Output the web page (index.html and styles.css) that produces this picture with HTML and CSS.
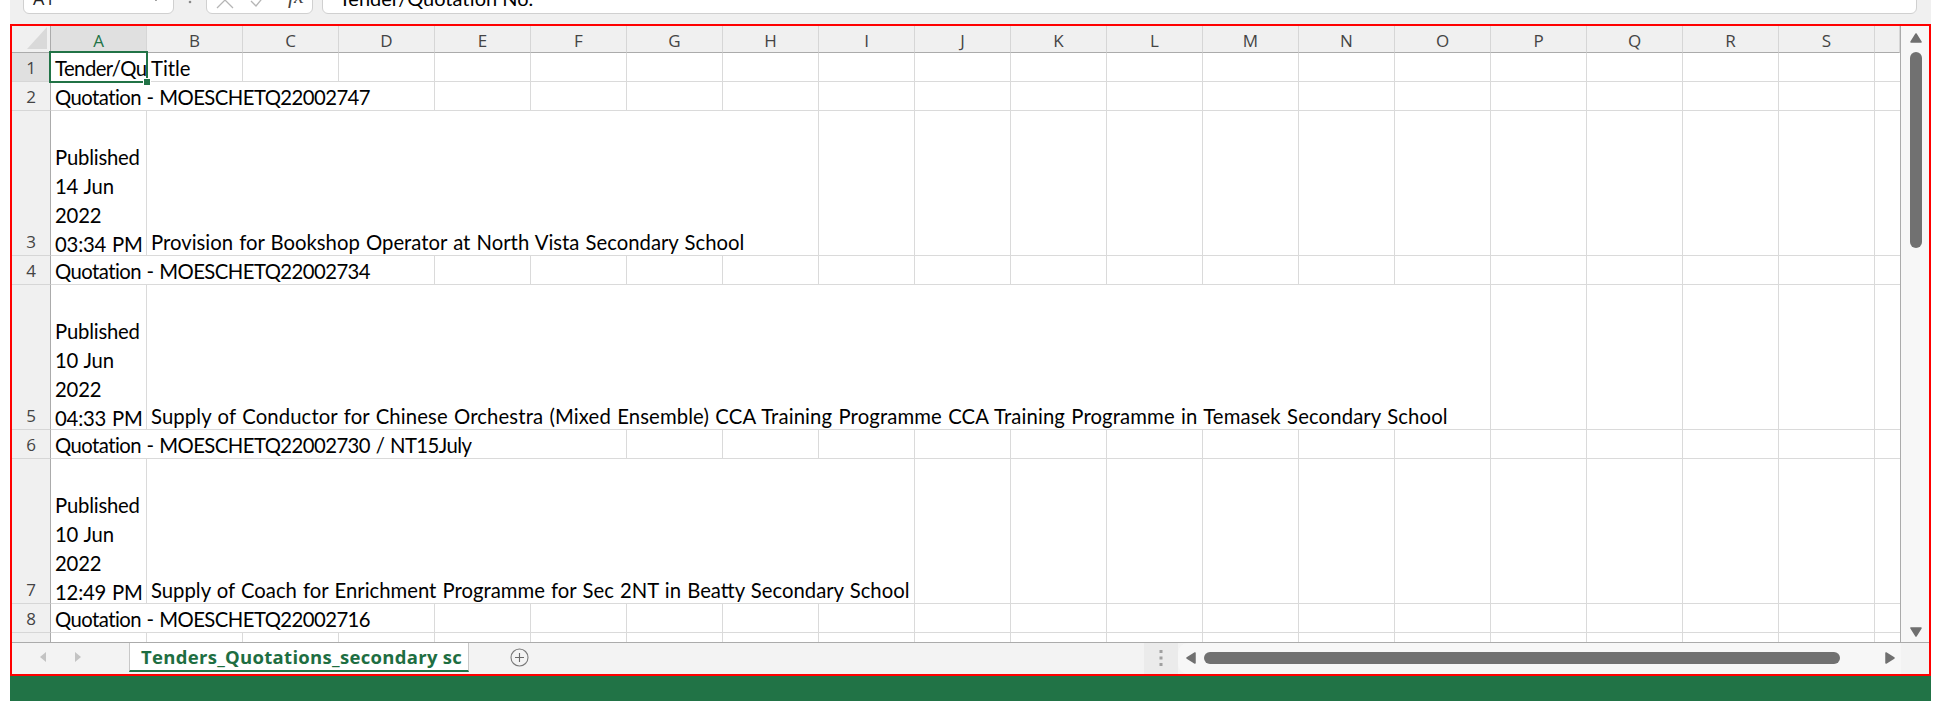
FILE: index.html
```html
<!DOCTYPE html>
<html lang="en">
<head>
<meta charset="utf-8">
<title>Tenders_Quotations_secondary sc</title>
<link rel="stylesheet" href="styles.css">
</head>
<body>
<div class="window">
  <div class="fbar">
    <div class="namebox"><span class="nb-text">A1</span>
      <svg class="nb-arrow" width="10" height="6" viewBox="0 0 10 6"><path d="M1 1 L5 5 L9 1" fill="none" stroke="#444" stroke-width="1.4"/></svg>
    </div>
    <div class="fb-dots"><svg width="4" height="32" viewBox="0 0 4 32"><circle cx="2" cy="12" r="1.3" fill="#8a8a8a"/><circle cx="2" cy="20" r="1.3" fill="#8a8a8a"/></svg></div>
    <div class="fb-btns">
      <svg class="fb-x" width="18" height="18" viewBox="0 0 18 18"><path d="M1 1 L17 17 M17 1 L1 17" stroke="#b5b5b5" stroke-width="1.3"/></svg>
      <svg class="fb-ok" width="16" height="14" viewBox="0 0 16 14"><path d="M1 7 L6 12 L15 1" fill="none" stroke="#b5b5b5" stroke-width="1.3"/></svg>
      <span class="fb-fx">fx</span>
    </div>
    <div class="fb-input">Tender/Quotation No.</div>
  </div>

  <div class="sheet">
    <div class="main">
      <div class="grid">
        <!-- header row -->
        <div class="corner"><svg width="20" height="22" viewBox="0 0 20 22"><path d="M20 0 L20 22 L0 22 Z" fill="#d9d9d9"/></svg></div>
        <div class="ch sel">A</div>
        <div class="ch">B</div>
        <div class="ch">C</div>
        <div class="ch">D</div>
        <div class="ch">E</div>
        <div class="ch">F</div>
        <div class="ch">G</div>
        <div class="ch">H</div>
        <div class="ch">I</div>
        <div class="ch">J</div>
        <div class="ch">K</div>
        <div class="ch">L</div>
        <div class="ch">M</div>
        <div class="ch">N</div>
        <div class="ch">O</div>
        <div class="ch">P</div>
        <div class="ch">Q</div>
        <div class="ch">R</div>
        <div class="ch">S</div>
        <div class="ch last"></div>

        <!-- row 1 -->
        <div class="rh sel">1</div>
        <div class="c txt clip code">Tender/Quotation No.</div>
        <div class="c txt">Title</div>
        <div class="c"></div>
        <div class="c"></div>
        <div class="c"></div>
        <div class="c"></div>
        <div class="c"></div>
        <div class="c"></div>
        <div class="c"></div>
        <div class="c"></div>
        <div class="c"></div>
        <div class="c"></div>
        <div class="c"></div>
        <div class="c"></div>
        <div class="c"></div>
        <div class="c"></div>
        <div class="c"></div>
        <div class="c"></div>
        <div class="c"></div>
        <div class="c last"></div>

        <!-- row 2 -->
        <div class="rh">2</div>
        <div class="c txt code span4">Quotation - MOESCHETQ22002747</div>
        <div class="c"></div>
        <div class="c"></div>
        <div class="c"></div>
        <div class="c"></div>
        <div class="c"></div>
        <div class="c"></div>
        <div class="c"></div>
        <div class="c"></div>
        <div class="c"></div>
        <div class="c"></div>
        <div class="c"></div>
        <div class="c"></div>
        <div class="c"></div>
        <div class="c"></div>
        <div class="c"></div>
        <div class="c last"></div>

        <!-- row 3 -->
        <div class="rh">3</div>
        <div class="c txt multi"><span>Published</span><span>14 Jun</span><span>2022</span><span>03:34 PM</span></div>
        <div class="c txt span7">Provision for Bookshop Operator at North Vista Secondary School</div>
        <div class="c"></div>
        <div class="c"></div>
        <div class="c"></div>
        <div class="c"></div>
        <div class="c"></div>
        <div class="c"></div>
        <div class="c"></div>
        <div class="c"></div>
        <div class="c"></div>
        <div class="c"></div>
        <div class="c"></div>
        <div class="c last"></div>

        <!-- row 4 -->
        <div class="rh">4</div>
        <div class="c txt code span4">Quotation - MOESCHETQ22002734</div>
        <div class="c"></div>
        <div class="c"></div>
        <div class="c"></div>
        <div class="c"></div>
        <div class="c"></div>
        <div class="c"></div>
        <div class="c"></div>
        <div class="c"></div>
        <div class="c"></div>
        <div class="c"></div>
        <div class="c"></div>
        <div class="c"></div>
        <div class="c"></div>
        <div class="c"></div>
        <div class="c"></div>
        <div class="c last"></div>

        <!-- row 5 -->
        <div class="rh">5</div>
        <div class="c txt multi"><span>Published</span><span>10 Jun</span><span>2022</span><span>04:33 PM</span></div>
        <div class="c txt long span14">Supply of Conductor for Chinese Orchestra (Mixed Ensemble) CCA Training Programme CCA Training Programme in Temasek Secondary School</div>
        <div class="c"></div>
        <div class="c"></div>
        <div class="c"></div>
        <div class="c"></div>
        <div class="c last"></div>

        <!-- row 6 -->
        <div class="rh">6</div>
        <div class="c txt code span6">Quotation - MOESCHETQ22002730 / NT15July</div>
        <div class="c"></div>
        <div class="c"></div>
        <div class="c"></div>
        <div class="c"></div>
        <div class="c"></div>
        <div class="c"></div>
        <div class="c"></div>
        <div class="c"></div>
        <div class="c"></div>
        <div class="c"></div>
        <div class="c"></div>
        <div class="c"></div>
        <div class="c"></div>
        <div class="c last"></div>

        <!-- row 7 -->
        <div class="rh">7</div>
        <div class="c txt multi"><span>Published</span><span>10 Jun</span><span>2022</span><span>12:49 PM</span></div>
        <div class="c txt span8">Supply of Coach for Enrichment Programme for Sec 2NT in Beatty Secondary School</div>
        <div class="c"></div>
        <div class="c"></div>
        <div class="c"></div>
        <div class="c"></div>
        <div class="c"></div>
        <div class="c"></div>
        <div class="c"></div>
        <div class="c"></div>
        <div class="c"></div>
        <div class="c"></div>
        <div class="c last"></div>

        <!-- row 8 -->
        <div class="rh">8</div>
        <div class="c txt code span4">Quotation - MOESCHETQ22002716</div>
        <div class="c"></div>
        <div class="c"></div>
        <div class="c"></div>
        <div class="c"></div>
        <div class="c"></div>
        <div class="c"></div>
        <div class="c"></div>
        <div class="c"></div>
        <div class="c"></div>
        <div class="c"></div>
        <div class="c"></div>
        <div class="c"></div>
        <div class="c"></div>
        <div class="c"></div>
        <div class="c"></div>
        <div class="c last"></div>

        <!-- row 9 (partially visible) -->
        <div class="rh">9</div>
        <div class="c"></div>
        <div class="c"></div>
        <div class="c"></div>
        <div class="c"></div>
        <div class="c"></div>
        <div class="c"></div>
        <div class="c"></div>
        <div class="c"></div>
        <div class="c"></div>
        <div class="c"></div>
        <div class="c"></div>
        <div class="c"></div>
        <div class="c"></div>
        <div class="c"></div>
        <div class="c"></div>
        <div class="c"></div>
        <div class="c"></div>
        <div class="c"></div>
        <div class="c"></div>
        <div class="c last"></div>

        <div class="active-cell"><span class="handle"></span></div>
      </div>

      <div class="vscroll">
        <svg class="v-up" width="12" height="10" viewBox="0 0 12 10"><path d="M6 1 L11 9 L1 9 Z" fill="#707070" stroke="#707070" stroke-width="1.5" stroke-linejoin="round"/></svg>
        <div class="v-thumb"></div>
        <div class="v-fill"></div>
        <svg class="v-down" width="12" height="10" viewBox="0 0 12 10"><path d="M1 1 L11 1 L6 9 Z" fill="#707070" stroke="#707070" stroke-width="1.5" stroke-linejoin="round"/></svg>
      </div>
    </div>

    <div class="tabbar">
      <div class="tab-nav">
        <svg width="6" height="10" viewBox="0 0 6 10"><path d="M6 0 L6 10 L0 5 Z" fill="#c3c3c3"/></svg>
        <svg width="6" height="10" viewBox="0 0 6 10"><path d="M0 0 L0 10 L6 5 Z" fill="#c3c3c3"/></svg>
      </div>
      <div class="tab">Tenders_Quotations_secondary sc</div>
      <div class="tab-add"><svg width="19" height="19" viewBox="0 0 19 19"><circle cx="9.5" cy="9.5" r="8.5" fill="none" stroke="#7a7a7a" stroke-width="1.1"/><path d="M9.5 5 V14 M5 9.5 H14" stroke="#6a6a6a" stroke-width="1.1"/></svg></div>
      <div class="tab-space"></div>
      <div class="hsplit"><svg width="4" height="16" viewBox="0 0 4 16"><rect x="0.5" y="0" width="3" height="3" fill="#a0a0a0"/><rect x="0.5" y="6.5" width="3" height="3" fill="#a0a0a0"/><rect x="0.5" y="13" width="3" height="3" fill="#a0a0a0"/></svg></div>
      <div class="hscroll">
        <svg class="h-left" width="10" height="12" viewBox="0 0 10 12"><path d="M9 1 L9 11 L1 6 Z" fill="#707070" stroke="#707070" stroke-width="1.5" stroke-linejoin="round"/></svg>
        <div class="h-thumb"></div>
        <svg class="h-right" width="10" height="12" viewBox="0 0 10 12"><path d="M1 1 L1 11 L9 6 Z" fill="#707070" stroke="#707070" stroke-width="1.5" stroke-linejoin="round"/></svg>
      </div>
      <div class="corner-box"></div>
    </div>
  </div>

  <div class="statusbar"></div>
</div>
</body>
</html>
```

FILE: styles.css
```css
* { box-sizing: border-box; }

body {
  margin: 0;
  background: #ffffff;
  font-family: Lato, "Liberation Sans", sans-serif;
  color: #000;
}

.window {
  margin-left: 10px;
  width: 1921px;
}

/* ---------- formula bar (top, partially cut) ---------- */
.fbar {
  height: 24px;
  background: #f0f0f0;
  display: flex;
  align-items: flex-end;
  padding: 0 14px 10px 13px;
  overflow: hidden;
}

.namebox {
  flex: 0 0 151px;
  height: 32px;
  background: #fff;
  border: 1px solid #d0d0d0;
  border-radius: 6px;
  display: flex;
  align-items: center;
  justify-content: space-between;
  padding: 0 12px 0 9px;
  font-family: "Open Sans", sans-serif;
  font-size: 18px;
  color: #222;
}

.fb-dots {
  flex: 0 0 32px;
  height: 32px;
  display: flex;
  justify-content: center;
}

.fb-btns {
  flex: 0 0 107px;
  height: 32px;
  background: #fff;
  border: 1px solid #d0d0d0;
  border-radius: 6px;
  display: flex;
  align-items: center;
  padding: 0 0 0 9px;
}

.fb-x { margin-top: 4px; }
.fb-ok { margin-left: 16px; margin-top: 6px; }

.fb-fx {
  margin-left: 22px;
  font-family: "Liberation Serif", serif;
  font-style: italic;
  font-size: 22px;
  color: #444;
  line-height: 32px;
  margin-top: -4px;
}

.fb-input {
  flex: 1;
  height: 32px;
  margin-left: 9px;
  background: #fff;
  border: 1px solid #d0d0d0;
  border-radius: 6px;
  padding-left: 16px;
  font-size: 20px;
  line-height: 30px;
  color: #000;
}

/* ---------- sheet ---------- */
.sheet {
  border: 2px solid #ff0000;
}

.main {
  display: flex;
  height: 617px;
  border-bottom: 1px solid #ababab;
}

.grid {
  position: relative;
  flex: 0 0 1889px;
  height: 616px;
  display: grid;
  grid-template-columns: 39px repeat(19, 96px) 25px;
  grid-template-rows: 27px 29px 29px 145px 29px 145px 29px 145px 29px 29px;
  overflow: hidden;
  border-right: 1px solid #ababab;
  background: #fff;
}

.corner {
  background: #f0f0f0;
  border-right: 1px solid #ababab;
  border-bottom: 1px solid #ababab;
  display: flex;
  align-items: flex-end;
  justify-content: flex-end;
  padding: 0 3px 3px 0;
}

.ch {
  background: #f0f0f0;
  border-right: 1px solid #d6d6d6;
  border-bottom: 1px solid #ababab;
  display: flex;
  align-items: center;
  justify-content: center;
  padding-top: 3px;
  font-family: "Open Sans", sans-serif;
  font-size: 17px;
  color: #444;
}

.ch.sel {
  background: #e0e0e0;
  color: #217346;
}

.rh {
  grid-column: 1;
  background: #f0f0f0;
  border-right: 1px solid #ababab;
  border-bottom: 1px solid #d6d6d6;
  display: flex;
  align-items: flex-end;
  justify-content: center;
  font-family: "Open Sans", sans-serif;
  font-size: 17px;
  line-height: 26px;
  color: #444;
}

.rh.sel {
  background: #e0e0e0;
}

.c {
  border-right: 1px solid #dadada;
  border-bottom: 1px solid #dadada;
  min-width: 0;
}

.c.last { border-right: none; }

.txt {
  display: flex;
  flex-direction: column;
  justify-content: flex-end;
  padding: 0 4px;
  font-size: 20.3px;
  word-spacing: 1px;
  line-height: 25px;
  white-space: nowrap;
  color: #000;
}

.txt.code { letter-spacing: -0.55px; }
.txt.long { letter-spacing: 0.12px; }

.txt.multi { line-height: 29px; letter-spacing: -0.2px; }
.txt.multi span:last-child { margin-bottom: -4px; }

.clip { overflow: hidden; }

.span4 { grid-column: span 4; }
.span6 { grid-column: span 6; }
.span7 { grid-column: span 7; }
.span8 { grid-column: span 8; }
.span14 { grid-column: span 14; }

.active-cell {
  position: absolute;
  left: 37px;
  top: 25px;
  width: 99px;
  height: 32px;
  border: 2px solid #217346;
  pointer-events: none;
}

.handle {
  position: absolute;
  right: -5px;
  bottom: -5px;
  width: 8px;
  height: 8px;
  background: #217346;
  border: 1px solid #fff;
}

/* vertical scrollbar */
.vscroll {
  flex: 0 0 28px;
  background: #f7f7f7;
  display: flex;
  flex-direction: column;
  align-items: center;
  padding: 7px 0 5px;
}

.v-up { flex: 0 0 auto; margin-left: 1px; }
.v-thumb {
  width: 12px;
  height: 196px;
  margin-top: 9px;
  margin-left: 1px;
  background: #717171;
  border-radius: 6px;
}
.v-fill { flex: 1; }
.v-down { flex: 0 0 auto; margin-left: 1px; }

/* ---------- tab bar ---------- */
.tabbar {
  height: 31px;
  display: flex;
  background: #f3f3f3;
}

.tab-nav {
  flex: 0 0 117px;
  display: flex;
  align-items: center;
  padding: 0 0 3px 28px;
  gap: 29px;
}

.tab {
  flex: 0 0 340px;
  height: 29px;
  background: #fff;
  border-left: 1px solid #c8c8c8;
  border-right: 1px solid #c8c8c8;
  border-bottom: 2px solid #217346;
  display: flex;
  align-items: center;
  padding-left: 11px;
  font-family: "Open Sans", sans-serif;
  font-weight: 700;
  font-size: 18.5px;
  letter-spacing: 0.3px;
  color: #1e6e42;
  white-space: nowrap;
  overflow: hidden;
}

.tab-add {
  flex: 0 0 auto;
  display: flex;
  align-items: center;
  padding: 0 0 3px 41px;
}

.tab-space { flex: 1; }

.hsplit {
  flex: 0 0 34px;
  background: #ebebeb;
  display: flex;
  align-items: center;
  justify-content: center;
  padding-bottom: 2px;
}

.hscroll {
  flex: 0 0 723px;
  display: flex;
  align-items: center;
  padding: 0 0 2px 8px;
  background: #f7f7f7;
  border-radius: 10px 0 0 10px;
}

.h-thumb {
  width: 636px;
  height: 12px;
  margin-left: 8px;
  background: #717171;
  border-radius: 6px;
}

.h-right { margin-left: 45px; }

.corner-box {
  flex: 0 0 28px;
  background: #f3f3f3;
}

/* ---------- status bar ---------- */
.statusbar {
  height: 25px;
  background: #217346;
}
```
